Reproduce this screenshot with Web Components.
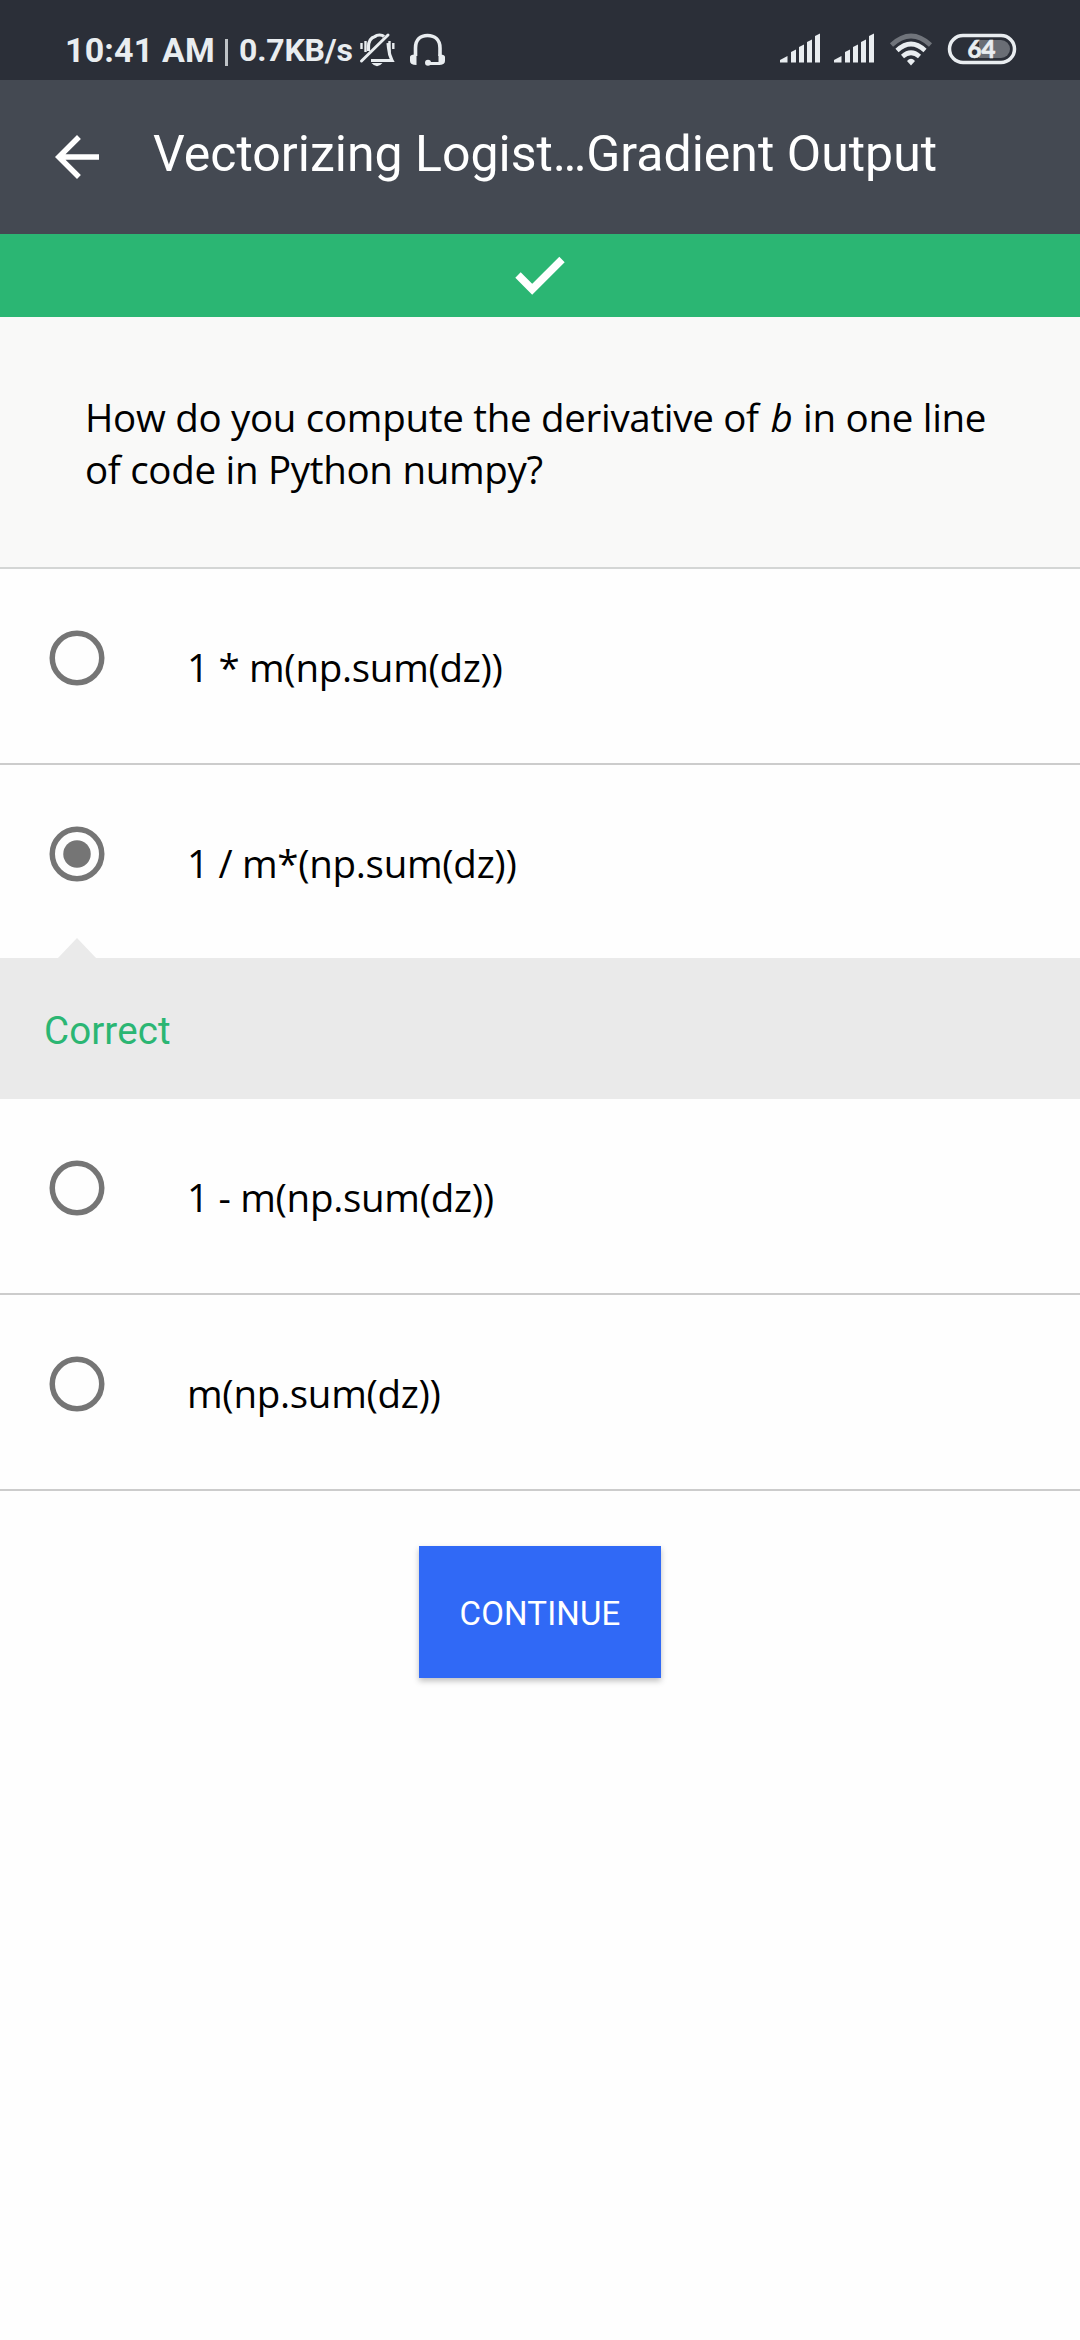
<!DOCTYPE html>
<html lang="en"><head><meta charset="utf-8"><title>Quiz</title>
<style>
html,body{margin:0;background:#fefefe}
body{width:1080px;min-height:2340px;font-family:Roboto,sans-serif;color:#000}
</style></head><body>
<quiz-app></quiz-app>
<script>
const define=(name,html)=>customElements.define(name,class extends HTMLElement{
  constructor(){super();this.attachShadow({mode:'open'}).innerHTML=html;}
});

define('status-bar',`<style>
:host{display:flex;height:80px;background:#2b2f38;color:#e9edf0;justify-content:space-between;box-sizing:border-box;padding:0 58px 0 65px;font-weight:700}
.side{display:flex;align-items:flex-start}
svg{display:block;flex:none}
.t{line-height:40px;padding-top:30px;white-space:nowrap}
.time{font-size:34px;width:150px;letter-spacing:.15px}
.bar{width:3px;height:27px;margin:39px 0 0 10px;background:#bfc3c7}
.net{font-size:32px;width:116px;margin-left:11px;letter-spacing:-.2px}
</style>
<div class="side"><span class="t time">10:41 AM</span><span class="bar"></span><span class="t net">0.7KB/s</span>
<svg width="104" height="80" viewBox="355 0 104 80" fill="none" stroke="#e9edf0">
<path d="M368.500 51V47C368.500 40 371.500 37.500 375 36.500C377 34.500 382 34.500 384 36.500M388 43C389 49 388 53 392 60.500H371" stroke-width="3.200"/>
<path d="M361.500 61L388 35" stroke-width="3" stroke-linecap="round"/>
<path d="M361.500 43V49M365.500 41V52M389.500 41V52M393.300 43V49" stroke-width="2.400"/>
<path d="M371.500 63H382.500Q377 69.500 371.500 63Z" fill="#e9edf0" stroke="none"/>
<path d="M415.500 56V48C415.500 39.500 420.500 35.500 427.500 35.500S440 39.500 440 48V56" stroke-width="3.600"/>
<path d="M410 57Q410 54 416.500 54.500V65Q410 65 410 61ZM445 57Q445 54 438.500 54.500V65Q445 65 445 61Z" fill="#e9edf0" stroke="none"/>
<path d="M428 63.500H440" stroke-width="3"/><circle cx="428" cy="62.800" r="3" fill="#e9edf0" stroke="none"/>
</svg></div>
<svg width="246" height="80" viewBox="776 0 246 80" fill="#e9edf0">
<path d="M780 60L787.500 56V62.500H780ZM791 52L796 49.500V62.500H791ZM799 47L804 44.500V62.500H799ZM807 42L812 39.500V62.500H807ZM815 36L820 33.500V62.500H815Z"/>
<path transform="translate(54)" d="M780 60L787.500 56V62.500H780ZM791 52L796 49.500V62.500H791ZM799 47L804 44.500V62.500H799ZM807 42L812 39.500V62.500H807ZM815 36L820 33.500V62.500H815Z"/>
<g fill="none" stroke="#e9edf0" stroke-width="4.600"><path d="M891.500 45Q911 27 930.500 45" stroke="#70747b"/><path d="M897 50.500Q911 37.500 925 50.500"/><path d="M902.500 56.500Q911 49 919.500 56.500"/></g><path d="M907 61Q911 56.500 915 61L911 65.500Z"/>
<rect x="949.500" y="35.500" width="65" height="27" rx="13.500" fill="none" stroke="#e9edf0" stroke-width="3.500"/>
<path d="M979 40H1001A9 9 0 0 1 1001 58H979Z" fill="#6a6e75"/>
<text x="981.500" y="58" text-anchor="middle" font-family="Lato,sans-serif" font-weight="700" font-size="24" stroke="#e9edf0" stroke-width=".7">64</text>
</svg>`);

define('app-bar',`<style>
:host{display:flex;height:154px;background:#444952;color:#fff;align-items:center}
svg{margin-left:44px;flex:none;display:block}
h1{margin:0 0 0 43px;font-weight:400;font-size:50px;line-height:60px;padding-bottom:6px;white-space:nowrap}
</style><svg width="66" height="66" viewBox="0 0 24 24" fill="#fff"><path d="M20 11H7.830l5.590-5.590L12 4l-8 8 8 8 1.410-1.410L7.830 13H20v-2z"/></svg><h1><slot></slot></h1>`);

define('result-banner',`<style>:host{display:flex;height:83px;background:#2bb673;align-items:center;justify-content:center}svg{display:block}</style>
<svg width="60" height="60" viewBox="510 245.500 60 60"><path d="M518 274.500L532.200 288.800L562 259" fill="none" stroke="#fff" stroke-width="7.600"/></svg>`);

define('quiz-question',`<style>
:host{display:block;box-sizing:border-box;height:252px;background:#f9f9f8;border-bottom:2px solid #d4d6d5;padding:74px 80px 0 85px;font:400 38.500px/52px "Open Sans",sans-serif;letter-spacing:-.3px}
::slotted(i){margin:0 1px 0 2px}
</style><slot></slot>`);

define('answer-option',`<style>
:host{display:flex;box-sizing:border-box;height:196px;border-bottom:2px solid #ccc;background:#fefefe}
:host([checked]){height:193px;border:0}
svg{display:block;margin:56px 0 0 44px}
circle{fill:none;stroke:#757575;stroke-width:5.500}
.dot{display:none;fill:#757575;stroke:none}
:host([checked]) .dot{display:block}
span{font:400 38.500px/52px "Open Sans",sans-serif;letter-spacing:-.3px;margin:72px 0 0 77px;white-space:nowrap}
</style><svg width="66" height="66"><circle cx="33" cy="33" r="24.750"/><circle class="dot" cx="33" cy="33" r="13.750"/></svg><span><slot></slot></span>`);

define('answer-feedback',`<style>
:host{display:flex;box-sizing:border-box;position:relative;height:141px;background:#eaeaea;color:#2bb673;align-items:center;padding:4px 0 0 44px;font-size:38.500px;line-height:46px;letter-spacing:.1px}
:host::before{content:"";position:absolute;left:57px;top:-20px;width:40px;height:21px;background:#eaeaea;clip-path:polygon(50% 0,100% 100%,0 100%)}
</style><span><slot></slot></span>`);

define('continue-button',`<style>
:host{display:flex;justify-content:center;padding-top:55px}
button{all:unset;box-sizing:border-box;width:242px;height:132px;background:#3069f6;color:#fff;text-align:center;font:400 33px/129px Roboto,sans-serif;letter-spacing:.15px;padding-top:3px;box-shadow:0 3px 6px rgba(0,0,0,.25)}
</style><button><slot></slot></button>`);

define('quiz-app',`<style>:host{display:flex;flex-direction:column}</style>
<status-bar></status-bar>
<app-bar>Vectorizing Logist…Gradient Output</app-bar>
<result-banner></result-banner>
<quiz-question>How do you compute the derivative of <i>b</i> in one line<br>of code in Python numpy?</quiz-question>
<answer-option>1 * m(np.sum(dz))</answer-option>
<answer-option checked>1 / m*(np.sum(dz))</answer-option>
<answer-feedback>Correct</answer-feedback>
<answer-option>1 - m(np.sum(dz))</answer-option>
<answer-option>m(np.sum(dz))</answer-option>
<continue-button>CONTINUE</continue-button>`);
</script></body></html>
